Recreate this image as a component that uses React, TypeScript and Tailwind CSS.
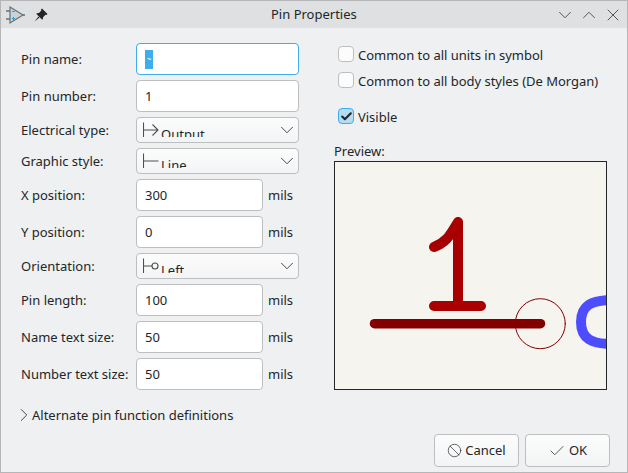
import { Ban, Check, ChevronDown, ChevronRight, ChevronUp, X } from 'lucide-react';
import type { ReactNode } from 'react';

function Label({ children }: { children: ReactNode }) {
    return <div className="w-[115px] shrink-0 whitespace-nowrap">{children}</div>;
}

function Field({
    label,
    value,
    wide,
    selected,
}: {
    label: string;
    value: string;
    wide?: boolean;
    selected?: boolean;
}) {
    return (
        <div className="flex h-[32px] items-center">
            <Label>{label}</Label>
            {wide ? (
                <div
                    className={`flex h-[32px] w-[163px] items-center rounded-[4px] border bg-white px-[8px] ${
                        selected ? 'border-[#3daee9]' : 'border-[#bcbebf]'
                    }`}
                >
                    {selected ? (
                        <span className="flex h-[19px] w-[8px] items-center justify-center bg-[#3daee9] text-[8px] text-white">
                            {value}
                        </span>
                    ) : (
                        value
                    )}
                </div>
            ) : (
                <>
                    <div className="flex h-[32px] w-[127px] items-center rounded-[4px] border border-[#bcbebf] bg-white px-[8px]">
                        {value}
                    </div>
                    <span className="ml-[5px]">mils</span>
                </>
            )}
        </div>
    );
}

function Combo({ label, text, icon }: { label: string; text: string; icon: ReactNode }) {
    return (
        <div className="flex h-[26px] items-center">
            <Label>{label}</Label>
            <div className="flex h-[26px] w-[163px] items-start justify-between rounded-[4px] border border-[#bcbebf] bg-gradient-to-b from-[#fcfcfc] to-[#f3f4f5] pl-[6px]">
                <div className="flex h-[19px] items-start overflow-hidden">
                    <div className="mt-[4px] h-[16px] w-[16px] shrink-0">{icon}</div>
                    <span className="ml-[2px] mt-[7px] leading-[18px]">{text}</span>
                </div>
                <ChevronDown className="mt-[1px] h-[22px] w-[22px]" strokeWidth={0.9} />
            </div>
        </div>
    );
}

function OutputIcon() {
    return (
        <svg viewBox="0 0 16 16" className="h-[16px] w-[16px]" fill="none" stroke="#4d4f52" strokeWidth="1.1">
            <path d="M0.5 0.5V15.5M0.5 8H15M9.5 2.5L15 8L9.5 13.5" />
        </svg>
    );
}

function LineIcon() {
    return (
        <svg viewBox="0 0 16 16" className="h-[16px] w-[16px]" fill="none" stroke="#4d4f52" strokeWidth="1.1">
            <path d="M0.5 0.5V15.5M0.5 8H15.5" />
        </svg>
    );
}

function LeftIcon() {
    return (
        <svg viewBox="0 0 16 16" className="h-[16px] w-[16px]" fill="none" stroke="#4d4f52" strokeWidth="1.1">
            <path d="M0.5 0.5V15.5M0.5 8H9" />
            <circle cx="12" cy="8" r="3" />
        </svg>
    );
}

function CheckBox({ label, checked }: { label: string; checked?: boolean }) {
    return (
        <div className="flex h-[16px] items-center whitespace-nowrap">
            <div
                className={`ml-[4px] flex h-[16px] w-[16px] items-center justify-center rounded-[4px] border ${
                    checked ? 'border-[#3daee9] bg-[#b5dcf2]' : 'border-[#bcbebf] bg-[#fcfcfc]'
                }`}
            >
                {checked && <Check className="h-[13px] w-[13px] text-[#232629]" strokeWidth={3.8} />}
            </div>
            <span className="ml-[4px] mt-[2px] tracking-[-0.02px]">{label}</span>
        </div>
    );
}

function PinPreview() {
    return (
        <svg viewBox="335 161 271 227" className="h-full w-full" fill="none" strokeLinecap="round" strokeLinejoin="round">
            <path
                d="M458 221V305M434 246C447 241 450 234 458 221M434 305H481"
                stroke="#a80000"
                strokeWidth="10"
            />
            <path d="M374.5 322.7H540.5" stroke="#840000" strokeWidth="9.5" />
            <circle cx="540.3" cy="322.7" r="25" stroke="#840000" strokeWidth="1" />
            <path
                d="M612 299C592 299 581 304 581 321C581 338 592 343 612 343"
                stroke="#4d4dff"
                strokeWidth="10"
            />
        </svg>
    );
}

function Button({ children }: { children: ReactNode }) {
    return (
        <div className="flex h-[33px] w-[85px] items-center justify-center gap-[3px] rounded-[4px] border border-[#bcbebf] bg-gradient-to-b from-[#fcfcfc] to-[#f3f4f5]">
            {children}
        </div>
    );
}

export default function App() {
    return (
        <div className="flex h-[473px] w-[628px] flex-col overflow-hidden border border-[#b4b6b8] bg-[#eff0f1] font-['Noto_Sans',sans-serif] text-[13px] leading-none text-[#232629]">
            <div className="relative flex h-[27px] shrink-0 items-center justify-between bg-[#dee0e2] pl-[5px] pr-[3px]">
                <div className="flex items-center">
                    <svg viewBox="0 0 20 20" className="h-[20px] w-[20px]" fill="none">
                        <path d="M0 6H4M0 14H4M16 10H19" stroke="#6b7074" strokeWidth="1.4" />
                        <path d="M4 2L17 10L4 18Z" fill="#c9d3da" stroke="#6b7074" strokeWidth="1.2" />
                        <path d="M6 6.5H9M6 13.5H9M7.5 12V15" stroke="#2f9fe0" strokeWidth="1.2" />
                    </svg>
                    <svg viewBox="0 0 14 14" className="ml-[8px] h-[14px] w-[14px]" fill="#232629">
                        <path d="M8 0.5L13.5 6L12.5 7L11.5 6.7L9 9.2C9.2 10.4 8.8 11.2 8.2 11.8L2.2 5.8C2.8 5.2 3.8 4.8 5 5L7.3 2.5L7 1.5Z" />
                        <path d="M4.5 8.5L0.5 13.5L5.5 9.5Z" />
                    </svg>
                </div>
                <span className="absolute left-[270px] top-[7px] whitespace-nowrap">Pin Properties</span>
                <div className="flex items-center gap-[2px]">
                    <ChevronDown className="h-[22px] w-[22px]" strokeWidth={0.8} />
                    <ChevronUp className="h-[22px] w-[22px]" strokeWidth={0.8} />
                    <div className="flex h-[22px] w-[22px] items-center justify-center">
                        <X className="h-[20px] w-[20px]" strokeWidth={0.9} />
                    </div>
                </div>
            </div>

            <div className="flex items-start pl-[20px] pt-[15px]">
                <div className="flex w-[278px] shrink-0 flex-col gap-[5px]">
                    <Field label="Pin name:" value="~" wide selected />
                    <Field label="Pin number:" value="1" wide />
                    <Combo label="Electrical type:" text="Output" icon={<OutputIcon />} />
                    <Combo label="Graphic style:" text="Line" icon={<LineIcon />} />
                    <Field label="X position:" value="300" />
                    <Field label="Y position:" value="0" />
                    <Combo label="Orientation:" text="Left" icon={<LeftIcon />} />
                    <Field label="Pin length:" value="100" />
                    <Field label="Name text size:" value="50" />
                    <Field label="Number text size:" value="50" />
                </div>
                <div className="ml-[35px] flex w-[273px] flex-col pt-[3px]">
                    <div className="flex flex-col gap-[10px]">
                        <CheckBox label="Common to all units in symbol" />
                        <CheckBox label="Common to all body styles (De Morgan)" />
                    </div>
                    <div className="mt-[20px]">
                        <CheckBox label="Visible" checked />
                    </div>
                    <div className="mt-[20px] leading-[15px]">Preview:</div>
                    <div className="mt-[2px] h-[229px] w-[273px] overflow-hidden border border-[#232629] bg-[#f5f4ef]">
                        <PinPreview />
                    </div>
                </div>
            </div>

            <div className="mt-[17px] flex h-[16px] items-center pl-[12px]">
                <ChevronRight className="h-[22px] w-[22px]" strokeWidth={0.9} />
                <span className="ml-[-3px]">Alternate pin function definitions</span>
            </div>

            <div className="mt-[11px] flex justify-end gap-[6px] pr-[17px]">
                <Button>
                    <Ban className="h-[15px] w-[15px]" strokeWidth={1.1} />
                    Cancel
                </Button>
                <Button>
                    <Check className="h-[18px] w-[18px]" strokeWidth={1} />
                    OK
                </Button>
            </div>
        </div>
    );
}
